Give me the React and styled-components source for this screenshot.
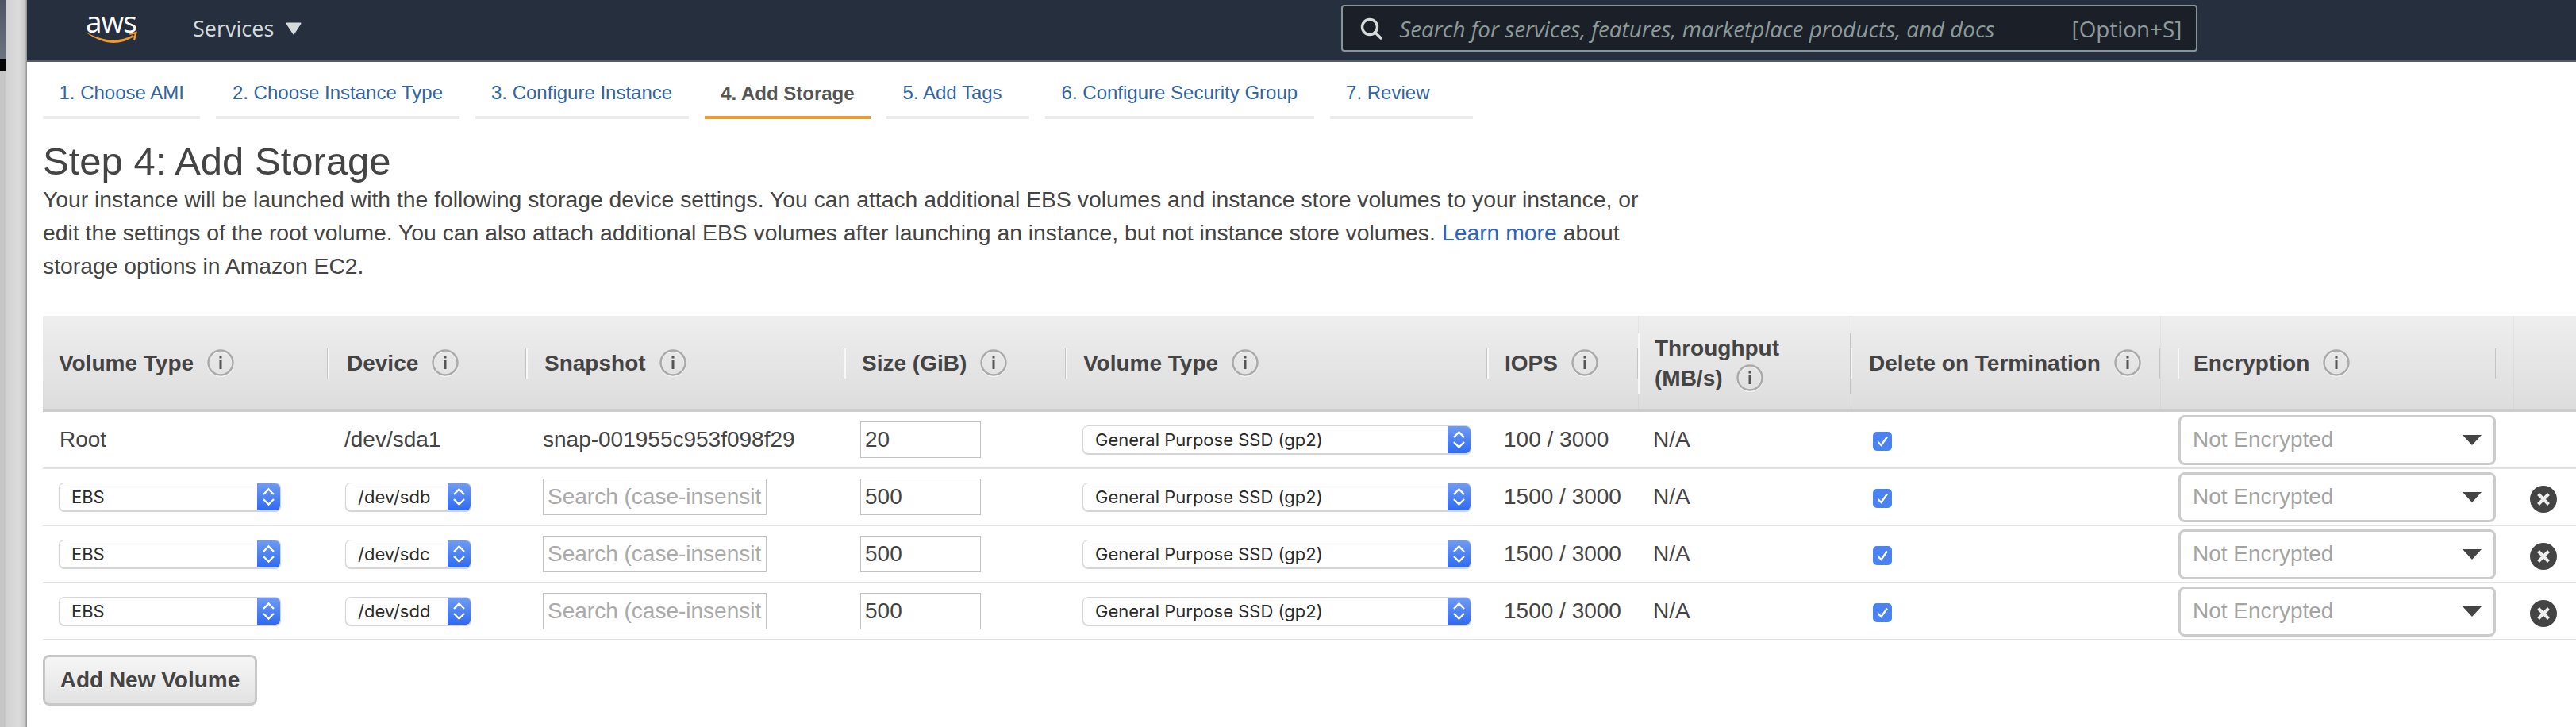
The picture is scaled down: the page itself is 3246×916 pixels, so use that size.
import React from "react";
import styled, { createGlobalStyle } from "styled-components";

const GlobalStyle = createGlobalStyle`
  html, body {
    margin: 0;
    padding: 0;
    background: #fff;
    overflow: hidden;
  }
  * {
    box-sizing: border-box;
  }
`;

const COLUMNS = "359px 250px 401px 279px 531px 190px 268px 390px 445px 79px";

const Page = styled.div`
  display: flex;
  width: 3246px;
  height: 916px;
  font-family: "Liberation Sans", Arial, sans-serif;
  color: #444;
  overflow: hidden;
`;

const Gutter = styled.div`
  display: flex;
  flex: 0 0 34px;
`;
const GutterEdge = styled.div`
  flex: 0 0 8px;
  display: flex;
  flex-direction: column;
  background: #c6c6c6;
  box-shadow: inset -1px 0 0 #9a9a9a;
`;
const EdgeTop = styled.div`
  height: 74px;
  background: linear-gradient(#4d5563, #6d7480);
`;
const EdgeBlack = styled.div`
  height: 16px;
  background: #050505;
`;
const GutterPane = styled.div`
  flex: 1;
  background: linear-gradient(90deg, #d2d2d2, #dcdcdc 60%, #c9c9c9 90%, #8e8e8e);
`;

const Main = styled.div`
  flex: 1;
  min-width: 0;
`;

const Nav = styled.header`
  display: flex;
  align-items: center;
  height: 78px;
  padding: 0 0 5px 73px;
  background: #252f3e;
  border-bottom: 2px solid #545b64;
`;
const Logo = styled.div`
  position: relative;
  flex: 0 0 66px;
  height: 40px;
  margin-top: -2px;
`;
const LogoWord = styled.span`
  display: block;
  font-family: "Open Sans", sans-serif;
  font-size: 37px;
  line-height: 24px;
  letter-spacing: -1px;
  text-align: center;
  color: #fff;
`;
const LogoSmile = styled.svg`
  position: absolute;
  left: 0;
  top: 24px;
`;
const ServicesMenu = styled.div`
  display: flex;
  align-items: center;
  gap: 15px;
  margin-left: 70px;
  font-family: "Open Sans", sans-serif;
  font-size: 27px;
  color: #d5dbdb;
`;
const SearchBox = styled.div`
  display: flex;
  align-items: center;
  width: 1079px;
  height: 59px;
  margin-left: 1310px;
  padding: 0 18px 0 22px;
  font-family: "Open Sans", sans-serif;
  background: #1b2028;
  border: 2px solid #87959a;
  border-radius: 4px;
`;
const SearchHint = styled.span`
  flex: 1;
  margin-left: 21px;
  font-size: 27.8px;
  font-style: italic;
  color: #8d9a9a;
`;
const SearchKey = styled.span`
  font-size: 27.8px;
  color: #8d9a9a;
`;

const Tabs = styled.nav`
  display: flex;
  gap: 20px;
  margin: 14px 0 0 20px;
`;
const Tab = styled.a`
  display: flex;
  align-items: center;
  min-width: 180px;
  height: 58px;
  padding: 0 20.5px ${(props) => (props.$active ? "2px" : "4px")};
  font-size: 24px;
  white-space: nowrap;
  color: ${(props) => (props.$active ? "#555" : "#33659f")};
  font-weight: ${(props) => (props.$active ? "bold" : "normal")};
  border-bottom: 4px solid ${(props) => (props.$active ? "#ec9a36" : "#ececec")};
`;

const Content = styled.div`
  padding-left: 20px;
`;
const Title = styled.h1`
  margin: 27px 0 0;
  font-size: 49px;
  font-weight: normal;
  line-height: 53px;
  color: #444;
`;
const Intro = styled.p`
  width: 2030px;
  margin: 0 0 42px;
  font-size: 28.32px;
  line-height: 42px;
  color: #444;
`;
const LearnMore = styled.a`
  margin: 0 8px;
  color: #2d65bd;
`;

const HeadRow = styled.div`
  display: grid;
  grid-template-columns: ${COLUMNS};
  height: 121px;
  background: linear-gradient(#eee, #ddd);
  border-bottom: 4px solid #ccc;
`;
const HeadCell = styled.div`
  display: flex;
  align-items: center;
  padding-top: 2px;
  padding-left: ${(props) => props.$inset || 0}px;
  padding-right: ${(props) => props.$inset || 0}px;
  box-shadow: ${(props) => (props.$edge ? "inset 1px 0 0 rgba(0, 0, 0, 0.035)" : "none")};
`;
const HeadLabel = styled.div`
  flex: 1;
  min-height: 38px;
  padding-left: ${(props) => props.$pad}px;
  font-size: 28px;
  font-weight: bold;
  line-height: 38px;
  color: #444;
  border-left: 2px solid ${(props) => (props.$first ? "transparent" : "#f8f8f8")};
  border-right: 1px solid #c4c4c4;
`;
const InfoIcon = styled.svg`
  display: inline-block;
  margin-left: 16px;
  vertical-align: -8px;
`;

const Row = styled.div`
  display: grid;
  grid-template-columns: ${COLUMNS};
  align-items: center;
  height: 72px;
  border-bottom: 2px solid #e2e2e2;
  font-size: 28px;
  color: #444;
`;
const Cell = styled.div`
  display: flex;
  align-items: center;
  padding-left: ${(props) => props.$pad}px;
  white-space: nowrap;
`;
const TextInput = styled.input`
  width: ${(props) => props.$w}px;
  height: 46px;
  margin-top: -1px;
  padding: 0 5px;
  font-family: "Liberation Sans", Arial, sans-serif;
  font-size: 28px;
  color: #444;
  background: #fff;
  border: 1.5px solid #c2c2c2;
  border-radius: 0;
  outline: none;
  &::placeholder {
    color: #aaa;
    opacity: 1;
  }
`;
const NativeSelect = styled.div`
  display: flex;
  align-items: stretch;
  width: ${(props) => props.$w}px;
  height: 34px;
  background: #fff;
  border-radius: 6px;
  box-shadow: 0 0 0 1px #d6d6d6, 0 1px 1px 1px rgba(0, 0, 0, 0.18);
`;
const NativeValue = styled.span`
  flex: 1;
  padding-left: 15px;
  font-family: Inter, "Liberation Sans", sans-serif;
  font-size: 22px;
  line-height: 34px;
  color: #2a2a2a;
`;
const NativeCap = styled.span`
  display: flex;
  align-items: center;
  justify-content: center;
  flex: 0 0 29px;
  background: linear-gradient(#6f9bf2, #2e6bf6);
  border-radius: 0 6px 6px 0;
`;
const CheckBox = styled.span`
  display: flex;
  align-items: center;
  justify-content: center;
  width: 24px;
  height: 24px;
  margin-top: 4px;
  background: #4a82f0;
  border-radius: 5px;
`;
const EncryptSelect = styled.div`
  display: flex;
  align-items: center;
  justify-content: space-between;
  width: 400px;
  height: 63px;
  padding: 0 15px 0 15px;
  color: #a3a3a3;
  background: #fff;
  border: 3px solid #ccc;
  border-radius: 8px;
`;
const Caret = styled.svg`
  flex: none;
`;
const RemoveIcon = styled.svg`
  margin-top: 6px;
`;
const AddButton = styled.button`
  display: block;
  width: 270px;
  height: 64px;
  margin-top: 18px;
  padding: 0;
  font-family: "Liberation Sans", Arial, sans-serif;
  font-size: 28px;
  font-weight: bold;
  color: #444;
  text-shadow: 0 1px 0 #fff;
  background: linear-gradient(#f6f6f6, #e2e2e2);
  border: 3px solid #c8c8c8;
  border-radius: 8px;
`;

const Info = () => (
  <InfoIcon width="36" height="36" viewBox="0 0 36 36">
    <circle cx="18" cy="19" r="15.5" fill="none" stroke="#f4f4f4" strokeWidth="3" />
    <circle cx="18" cy="18" r="15.5" fill="none" stroke="#aaa" strokeWidth="2.5" />
    <rect x="16.5" y="15" width="3" height="11" fill="#555" />
    <rect x="16.5" y="9.5" width="3" height="3" fill="#555" />
  </InfoIcon>
);

const Chevrons = () => (
  <svg width="17" height="26" viewBox="0 0 17 26" fill="none" stroke="#fff" strokeWidth="2.4">
    <path d="M2 10 L8.5 3.5 L15 10" />
    <path d="M2 16 L8.5 22.5 L15 16" />
  </svg>
);

const Select = ({ width, value }) => (
  <NativeSelect $w={width}>
    <NativeValue>{value}</NativeValue>
    <NativeCap>
      <Chevrons />
    </NativeCap>
  </NativeSelect>
);

const Encrypt = () => (
  <EncryptSelect>
    Not Encrypted
    <Caret width="24" height="13" viewBox="0 0 24 13">
      <path d="M0 0 H24 L12 13 Z" fill="#444" />
    </Caret>
  </EncryptSelect>
);

const Checked = () => (
  <CheckBox>
    <svg width="18" height="18" viewBox="0 0 18 18" fill="none" stroke="#fff" strokeWidth="2.4">
      <path d="M3.5 10 L7.5 14 L15 3.5" />
    </svg>
  </CheckBox>
);

const Remove = () => (
  <RemoveIcon width="34" height="34" viewBox="0 0 34 34">
    <circle cx="17" cy="17" r="17" fill="#444" />
    <path d="M10.5 10.5 L23.5 23.5 M23.5 10.5 L10.5 23.5" stroke="#eee" strokeWidth="4" />
  </RemoveIcon>
);

const steps = [
  "1. Choose AMI",
  "2. Choose Instance Type",
  "3. Configure Instance",
  "4. Add Storage",
  "5. Add Tags",
  "6. Configure Security Group",
  "7. Review",
];

const devices = ["/dev/sdb", "/dev/sdc", "/dev/sdd"];

const App = () => (
  <Page>
    <GlobalStyle />
    <Gutter>
      <GutterEdge>
        <EdgeTop />
        <EdgeBlack />
      </GutterEdge>
      <GutterPane />
    </Gutter>
    <Main>
      <Nav>
        <Logo>
          <LogoWord>aws</LogoWord>
          <LogoSmile width="66" height="16" viewBox="0 0 66 16">
            <path d="M0 1 C14 11 26 15 36 15 C45 15 54 12 62 7 L60.5 5 C52 9.5 44 11.5 36 11.5 C24 11.5 12 7 0 1 Z" fill="#ec9a36" />
            <path d="M56 3 L66 0.5 L63 12 L61 11 L62.5 3.8 L56.5 5 Z" fill="#ec9a36" />
          </LogoSmile>
        </Logo>
        <ServicesMenu>
          Services
          <svg width="20" height="16" viewBox="0 0 20 16">
            <path d="M1.5 1.5 H18.5 L10 14.5 Z" fill="#d5dbdb" stroke="#d5dbdb" strokeWidth="2" strokeLinejoin="round" />
          </svg>
        </ServicesMenu>
        <SearchBox>
          <svg width="28" height="28" viewBox="0 0 28 28" fill="none" stroke="#d5dbdb" strokeWidth="3.4">
            <circle cx="12" cy="12" r="9.5" />
            <path d="M18.5 18.5 L26 26" strokeLinecap="round" />
          </svg>
          <SearchHint>Search for services, features, marketplace products, and docs</SearchHint>
          <SearchKey>[Option+S]</SearchKey>
        </SearchBox>
      </Nav>
      <Tabs>
        {steps.map((step, i) => (
          <Tab key={step} $active={i === 3}>
            {step}
          </Tab>
        ))}
      </Tabs>
      <Content>
        <Title>Step 4: Add Storage</Title>
        <Intro>
          Your instance will be launched with the following storage device settings. You can attach additional EBS
          volumes and instance store volumes to your instance, or edit the settings of the root volume. You can also
          attach additional EBS volumes after launching an instance, but not instance store volumes.
          <LearnMore>Learn more</LearnMore>about storage options in Amazon EC2.
        </Intro>
        <HeadRow>
          <HeadCell>
            <HeadLabel $first $pad={18}>Volume Type<Info /></HeadLabel>
          </HeadCell>
          <HeadCell>
            <HeadLabel $pad={22}>Device<Info /></HeadLabel>
          </HeadCell>
          <HeadCell>
            <HeadLabel $pad={21}>Snapshot<Info /></HeadLabel>
          </HeadCell>
          <HeadCell>
            <HeadLabel $pad={20}>Size (GiB)<Info /></HeadLabel>
          </HeadCell>
          <HeadCell>
            <HeadLabel $pad={20}>Volume Type<Info /></HeadLabel>
          </HeadCell>
          <HeadCell>
            <HeadLabel $pad={20}>IOPS<Info /></HeadLabel>
          </HeadCell>
          <HeadCell $edge>
            <HeadLabel $pad={19}>Throughput<br />(MB/s)<Info /></HeadLabel>
          </HeadCell>
          <HeadCell $edge>
            <HeadLabel $pad={21}>Delete on Termination<Info /></HeadLabel>
          </HeadCell>
          <HeadCell $edge $inset={22}>
            <HeadLabel $pad={18}>Encryption<Info /></HeadLabel>
          </HeadCell>
          <HeadCell $edge />
        </HeadRow>
        <Row>
          <Cell $pad={21}>Root</Cell>
          <Cell $pad={21}>/dev/sda1</Cell>
          <Cell $pad={21}>snap-001955c953f098f29</Cell>
          <Cell $pad={20}><TextInput $w={152} readOnly value="20" /></Cell>
          <Cell $pad={22}><Select width={488} value="General Purpose SSD (gp2)" /></Cell>
          <Cell $pad={21}>100 / 3000</Cell>
          <Cell $pad={19}>N/A</Cell>
          <Cell $pad={28}><Checked /></Cell>
          <Cell $pad={23}><Encrypt /></Cell>
          <Cell $pad={21} />
        </Row>
        {devices.map((device) => (
          <Row key={device}>
            <Cell $pad={21}><Select width={278} value="EBS" /></Cell>
            <Cell $pad={23}><Select width={157} value={device} /></Cell>
            <Cell $pad={21}><TextInput $w={282} readOnly placeholder="Search (case-insensitive)" /></Cell>
            <Cell $pad={20}><TextInput $w={152} readOnly value="500" /></Cell>
            <Cell $pad={22}><Select width={488} value="General Purpose SSD (gp2)" /></Cell>
            <Cell $pad={21}>1500 / 3000</Cell>
            <Cell $pad={19}>N/A</Cell>
            <Cell $pad={28}><Checked /></Cell>
            <Cell $pad={23}><Encrypt /></Cell>
            <Cell $pad={21}><Remove /></Cell>
          </Row>
        ))}
        <AddButton>Add New Volume</AddButton>
      </Content>
    </Main>
  </Page>
);

export default App;
